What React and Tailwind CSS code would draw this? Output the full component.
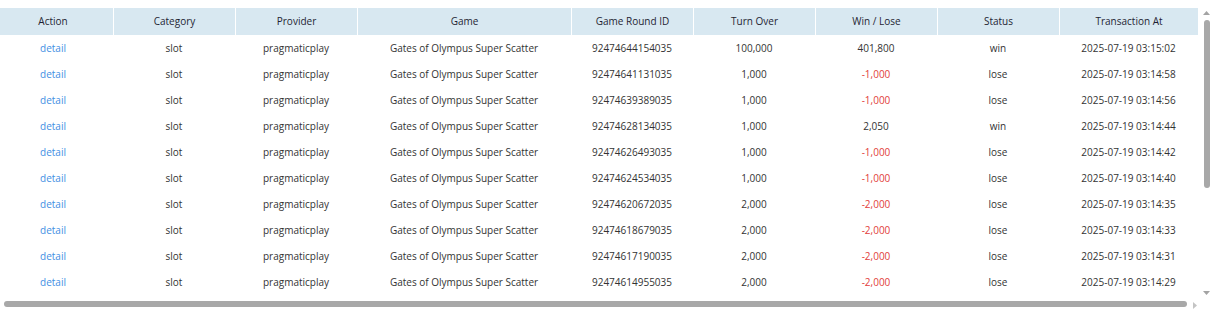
import { useState } from 'react';

const columns = ['Action', 'Category', 'Provider', 'Game', 'Game Round ID', 'Turn Over', 'Win / Lose', 'Status', 'Transaction At'];

const rows = [
  ['92474644154035', '100,000', '401,800', 'win', '2025-07-19 03:15:02'],
  ['92474641131035', '1,000', '-1,000', 'lose', '2025-07-19 03:14:58'],
  ['92474639389035', '1,000', '-1,000', 'lose', '2025-07-19 03:14:56'],
  ['92474628134035', '1,000', '2,050', 'win', '2025-07-19 03:14:44'],
  ['92474626493035', '1,000', '-1,000', 'lose', '2025-07-19 03:14:42'],
  ['92474624534035', '1,000', '-1,000', 'lose', '2025-07-19 03:14:40'],
  ['92474620672035', '2,000', '-2,000', 'lose', '2025-07-19 03:14:35'],
  ['92474618679035', '2,000', '-2,000', 'lose', '2025-07-19 03:14:33'],
  ['92474617190035', '2,000', '-2,000', 'lose', '2025-07-19 03:14:31'],
  ['92474614955035', '2,000', '-2,000', 'lose', '2025-07-19 03:14:29'],
];

const grid = 'grid grid-cols-[113px_122px_122px_214px_122px_122px_122px_122px_139px]';

const App = () => {
  const [data] = useState(rows);

  return (
    <div className="h-[311px] w-[1211px] bg-white font-['Open_Sans',sans-serif] text-[10px] overflow-hidden">
      <div className="flex pt-2 h-[297px]">
        {/* Table */}
        <div className="w-[1198px]">
          <div className={`${grid} h-[27px] bg-[#d8e8f1] text-[#1f1f33]`}>
            {columns.map((col, index) => (
              <div key={col} className={`flex items-center justify-center ${index > 0 ? 'border-l border-white' : 'pr-[7px]'}`}>
                {col}
              </div>
            ))}
          </div>

          {data.map((value) => (
            <div key={value[0]} className={`${grid} h-[26px] text-[#333]`}>
              <div className="flex items-center justify-center pr-[7px] text-[#3f8fe3] cursor-pointer">detail</div>
              <div className="flex items-center justify-center">slot</div>
              <div className="flex items-center justify-center">pragmaticplay</div>
              <div className="flex items-center justify-center">Gates of Olympus Super Scatter</div>
              <div className="flex items-center justify-center">{value[0]}</div>
              <div className="flex items-center justify-center">{value[1]}</div>
              <div className={`flex items-center justify-center ${value[2].startsWith('-') ? 'text-[#e2403b]' : ''}`}>{value[2]}</div>
              <div className="flex items-center justify-center">{value[3]}</div>
              <div className="flex items-center justify-center">{value[4]}</div>
            </div>
          ))}
        </div>

        {/* Vertical scrollbar */}
        <div className="w-[13px] flex flex-col items-center pl-[4px]">
          <svg width="7" height="4" viewBox="0 0 7 4" className="mt-[3px]">
            <path d="M3.5 0 L7 4 L0 4 Z" fill="#a3a3a3" />
          </svg>
          <div className="mt-[5px] w-[6px] h-[168px] rounded-full bg-[#a8a8a8]" />
          <div className="flex-1" />
          <svg width="7" height="4" viewBox="0 0 7 4" className="mb-[2px]">
            <path d="M0 0 L7 0 L3.5 4 Z" fill="#a3a3a3" />
          </svg>
        </div>
      </div>

      {/* Horizontal scrollbar */}
      <div className="flex items-center h-[14px] pl-[4px]">
        <div className="w-[1183px] h-[6px] rounded-full bg-[#a8a8a8]" />
        <svg width="4" height="7" viewBox="0 0 4 7" className="ml-[6px] mt-[2px]">
          <path d="M0 0 L4 3.5 L0 7 Z" fill="#c4c4c4" />
        </svg>
      </div>
    </div>
  );
};

export default App;
